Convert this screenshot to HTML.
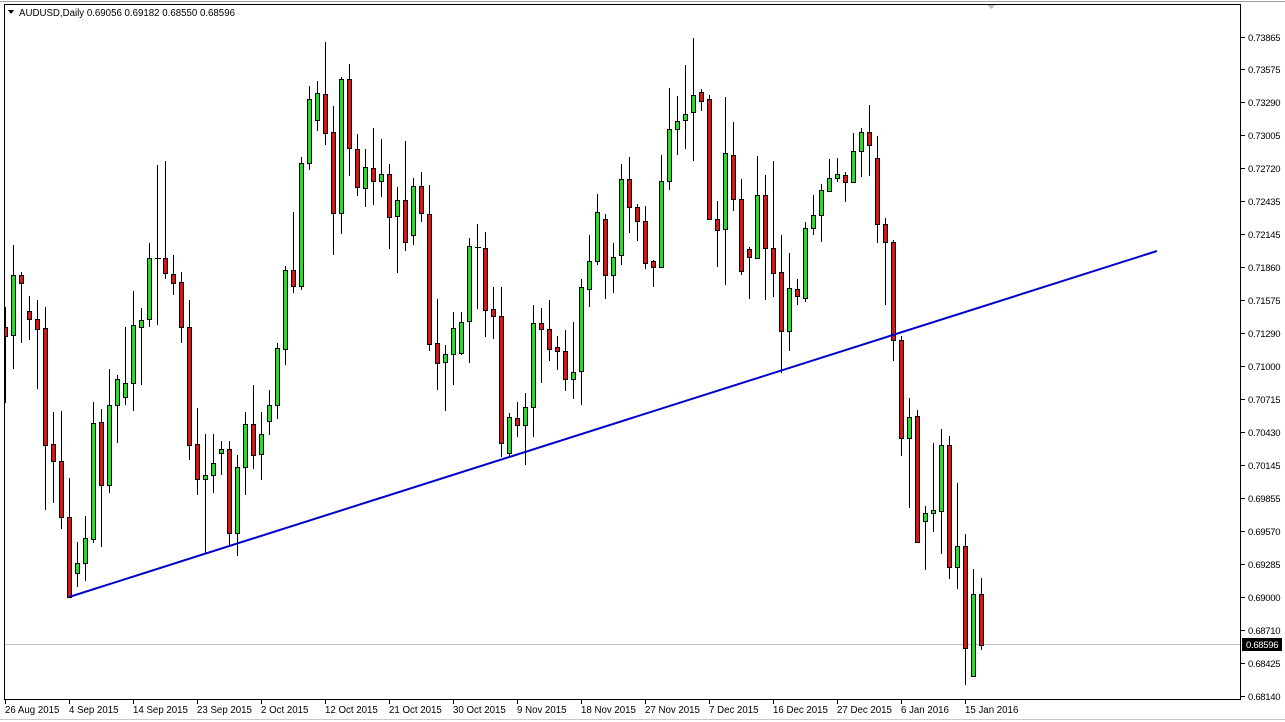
<!DOCTYPE html>
<html><head><meta charset="utf-8"><style>
html,body{margin:0;padding:0;background:#fff;}
svg{display:block;}
text{font-family:"Liberation Sans",sans-serif;font-size:9.7px;fill:#000;}
.ax text{font-size:9.5px;letter-spacing:-0.3px;}
</style></head><body>
<svg width="1285" height="722" viewBox="0 0 1285 722" xmlns="http://www.w3.org/2000/svg" shape-rendering="crispEdges">
<rect width="1285" height="722" fill="#fff"/>
<line x1="0" y1="1.5" x2="1285" y2="1.5" stroke="#a0a0a0"/>
<line x1="0" y1="719.5" x2="1285" y2="719.5" stroke="#c8c8c8"/>
<polygon points="986,4 996,4 991,9" fill="#c0c0c0"/>
<defs><clipPath id="c"><rect x="5" y="5" width="1236" height="695"/></clipPath></defs>
<line x1="4" y1="644.5" x2="1241" y2="644.5" stroke="#c0c0c0"/>
<g clip-path="url(#c)">
<path stroke="#000" stroke-width="1" fill="none" d="M5.5 307V403M13.5 245V369M21.5 272V343M29.5 296V340M37.5 300V389M45.5 307V510M53.5 412V503M61.5 411V529M69.5 478V597M77.5 542V587M85.5 516V581M93.5 402V543M101.5 409V547M109.5 369V493M117.5 375V443M125.5 327V405M133.5 291V411M141.5 308V385M149.5 243V327M157.5 165V325M165.5 161V279M173.5 255V295M181.5 272V343M189.5 300V460M197.5 408V495M205.5 434V553M213.5 434V493M221.5 441V475M229.5 441V547M237.5 455V556M245.5 412V495M253.5 385V469M261.5 412V480M269.5 390V435M277.5 343V419M285.5 266V365M293.5 212V293M301.5 157V290M309.5 86V170M317.5 81V131M325.5 42V145M333.5 106V255M341.5 77V234M349.5 64V176M357.5 134V196M365.5 149V207M373.5 128V205M381.5 139V197M389.5 164V249M397.5 187V273M405.5 141V251M413.5 178V245M421.5 172V222M429.5 185V351M437.5 299V390M445.5 345V411M453.5 312V385M461.5 312V355M469.5 238V363M477.5 224V309M485.5 232V337M493.5 287V339M501.5 287V457M509.5 413V457M517.5 402V437M525.5 393V465M533.5 305V437M541.5 308V383M549.5 300V361M557.5 336V370M565.5 330V391M573.5 322V399M581.5 279V405M589.5 235V307M597.5 194V265M605.5 214V299M613.5 243V293M621.5 164V265M629.5 157V233M637.5 204V241M645.5 206V269M653.5 260V287M661.5 155V267M669.5 88V190M677.5 96V155M685.5 65V149M693.5 38V161M701.5 89V111M709.5 95V219M717.5 201V267M725.5 97V285M733.5 122V211M741.5 179V275M749.5 247V299M757.5 156V259M765.5 175V300M773.5 161V297M781.5 235V373M789.5 253V351M797.5 279V305M805.5 222V302M813.5 195V235M821.5 184V242M829.5 159V192M837.5 158V182M845.5 172V202M853.5 133V182M861.5 128V177M869.5 105V176M877.5 136V243M885.5 218V305M893.5 240V361M901.5 336V456M909.5 398V508M917.5 410V542M925.5 506V570M933.5 443V532M941.5 429V554M949.5 436V579M957.5 483V589M965.5 534V685M973.5 569V677M981.5 578V650M155 258.5H161M475 247.5H481"/>
<g fill="#22e022" stroke="#000" stroke-width="1">
<rect x="11.5" y="275.5" width="4" height="60"/><rect x="75.5" y="563.5" width="4" height="10"/><rect x="83.5" y="538.5" width="4" height="25"/><rect x="91.5" y="423.5" width="4" height="116"/><rect x="107.5" y="405.5" width="4" height="80"/><rect x="115.5" y="379.5" width="4" height="26"/><rect x="123.5" y="383.5" width="4" height="14"/><rect x="131.5" y="325.5" width="4" height="58"/><rect x="139.5" y="320.5" width="4" height="7"/><rect x="147.5" y="258.5" width="4" height="61"/><rect x="203.5" y="475.5" width="4" height="4"/><rect x="211.5" y="463.5" width="4" height="12"/><rect x="219.5" y="449.5" width="4" height="4"/><rect x="235.5" y="467.5" width="4" height="66"/><rect x="243.5" y="424.5" width="4" height="43"/><rect x="259.5" y="434.5" width="4" height="20"/><rect x="267.5" y="405.5" width="4" height="16"/><rect x="275.5" y="348.5" width="4" height="57"/><rect x="283.5" y="270.5" width="4" height="79"/><rect x="299.5" y="163.5" width="4" height="123"/><rect x="307.5" y="99.5" width="4" height="64"/><rect x="315.5" y="93.5" width="4" height="27"/><rect x="339.5" y="79.5" width="4" height="134"/><rect x="363.5" y="167.5" width="4" height="21"/><rect x="379.5" y="174.5" width="4" height="7"/><rect x="395.5" y="200.5" width="4" height="16"/><rect x="411.5" y="186.5" width="4" height="49"/><rect x="443.5" y="354.5" width="4" height="8"/><rect x="451.5" y="328.5" width="4" height="26"/><rect x="459.5" y="322.5" width="4" height="31"/><rect x="467.5" y="246.5" width="4" height="75"/><rect x="507.5" y="417.5" width="4" height="36"/><rect x="523.5" y="407.5" width="4" height="18"/><rect x="531.5" y="323.5" width="4" height="84"/><rect x="571.5" y="372.5" width="4" height="7"/><rect x="579.5" y="287.5" width="4" height="84"/><rect x="587.5" y="261.5" width="4" height="28"/><rect x="595.5" y="212.5" width="4" height="49"/><rect x="611.5" y="257.5" width="4" height="18"/><rect x="619.5" y="179.5" width="4" height="76"/><rect x="659.5" y="181.5" width="4" height="86"/><rect x="667.5" y="129.5" width="4" height="52"/><rect x="675.5" y="121.5" width="4" height="8"/><rect x="683.5" y="114.5" width="4" height="6"/><rect x="691.5" y="95.5" width="4" height="17"/><rect x="723.5" y="153.5" width="4" height="76"/><rect x="755.5" y="195.5" width="4" height="63"/><rect x="787.5" y="288.5" width="4" height="43"/><rect x="803.5" y="228.5" width="4" height="70"/><rect x="811.5" y="215.5" width="4" height="13"/><rect x="819.5" y="190.5" width="4" height="25"/><rect x="827.5" y="178.5" width="4" height="13"/><rect x="835.5" y="174.5" width="4" height="4"/><rect x="851.5" y="151.5" width="4" height="31"/><rect x="859.5" y="132.5" width="4" height="19"/><rect x="907.5" y="417.5" width="4" height="21"/><rect x="923.5" y="513.5" width="4" height="8"/><rect x="931.5" y="510.5" width="4" height="3"/><rect x="939.5" y="445.5" width="4" height="66"/><rect x="955.5" y="546.5" width="4" height="21"/><rect x="971.5" y="594.5" width="4" height="82"/>
</g>
<g fill="#e01414" stroke="#000" stroke-width="1">
<rect x="3.5" y="327.5" width="4" height="9"/><rect x="19.5" y="275.5" width="4" height="8"/><rect x="27.5" y="311.5" width="4" height="8"/><rect x="35.5" y="319.5" width="4" height="10"/><rect x="43.5" y="328.5" width="4" height="117"/><rect x="51.5" y="444.5" width="4" height="17"/><rect x="59.5" y="461.5" width="4" height="56"/><rect x="67.5" y="517.5" width="4" height="80"/><rect x="99.5" y="422.5" width="4" height="63"/><rect x="163.5" y="258.5" width="4" height="15"/><rect x="171.5" y="274.5" width="4" height="9"/><rect x="179.5" y="282.5" width="4" height="45"/><rect x="187.5" y="327.5" width="4" height="118"/><rect x="195.5" y="444.5" width="4" height="35"/><rect x="227.5" y="449.5" width="4" height="84"/><rect x="251.5" y="424.5" width="4" height="31"/><rect x="291.5" y="270.5" width="4" height="16"/><rect x="323.5" y="94.5" width="4" height="39"/><rect x="331.5" y="132.5" width="4" height="81"/><rect x="347.5" y="79.5" width="4" height="69"/><rect x="355.5" y="149.5" width="4" height="38"/><rect x="371.5" y="168.5" width="4" height="13"/><rect x="387.5" y="174.5" width="4" height="43"/><rect x="403.5" y="200.5" width="4" height="42"/><rect x="419.5" y="186.5" width="4" height="27"/><rect x="427.5" y="214.5" width="4" height="130"/><rect x="435.5" y="343.5" width="4" height="20"/><rect x="483.5" y="248.5" width="4" height="62"/><rect x="491.5" y="309.5" width="4" height="7"/><rect x="499.5" y="316.5" width="4" height="127"/><rect x="515.5" y="418.5" width="4" height="7"/><rect x="539.5" y="323.5" width="4" height="6"/><rect x="547.5" y="329.5" width="4" height="20"/><rect x="555.5" y="347.5" width="4" height="4"/><rect x="563.5" y="351.5" width="4" height="28"/><rect x="603.5" y="219.5" width="4" height="56"/><rect x="627.5" y="179.5" width="4" height="28"/><rect x="635.5" y="207.5" width="4" height="14"/><rect x="643.5" y="221.5" width="4" height="42"/><rect x="651.5" y="261.5" width="4" height="6"/><rect x="699.5" y="92.5" width="4" height="9"/><rect x="707.5" y="99.5" width="4" height="120"/><rect x="715.5" y="219.5" width="4" height="11"/><rect x="731.5" y="155.5" width="4" height="44"/><rect x="739.5" y="199.5" width="4" height="72"/><rect x="747.5" y="249.5" width="4" height="8"/><rect x="763.5" y="195.5" width="4" height="53"/><rect x="771.5" y="248.5" width="4" height="25"/><rect x="779.5" y="272.5" width="4" height="59"/><rect x="795.5" y="289.5" width="4" height="7"/><rect x="843.5" y="175.5" width="4" height="7"/><rect x="867.5" y="132.5" width="4" height="13"/><rect x="875.5" y="158.5" width="4" height="66"/><rect x="883.5" y="224.5" width="4" height="18"/><rect x="891.5" y="242.5" width="4" height="98"/><rect x="899.5" y="340.5" width="4" height="98"/><rect x="915.5" y="416.5" width="4" height="126"/><rect x="947.5" y="445.5" width="4" height="122"/><rect x="963.5" y="546.5" width="4" height="102"/><rect x="979.5" y="594.5" width="4" height="51"/>
</g>
<line x1="69" y1="597" x2="1157" y2="251" stroke="#0000cc" stroke-width="2" shape-rendering="auto"/>
</g>
<rect x="4.5" y="4.5" width="1236" height="695" fill="none" stroke="#000"/>
<polygon points="8,10 14,10 11,14" fill="#000"/>
<text x="19" y="16">AUDUSD,Daily  0.69056 0.69182 0.68550 0.68596</text>
<g stroke="#000">
<path d="M1241 37.5h4M1241 69.5h4M1241 102.5h4M1241 135.5h4M1241 168.5h4M1241 201.5h4M1241 234.5h4M1241 267.5h4M1241 300.5h4M1241 333.5h4M1241 366.5h4M1241 399.5h4M1241 432.5h4M1241 465.5h4M1241 498.5h4M1241 531.5h4M1241 564.5h4M1241 597.5h4M1241 630.5h4M1241 663.5h4M1241 696.5h4"/>
<path d="M5.5 700v4M69.5 700v4M133.5 700v4M197.5 700v4M261.5 700v4M325.5 700v4M389.5 700v4M453.5 700v4M517.5 700v4M581.5 700v4M645.5 700v4M709.5 700v4M773.5 700v4M837.5 700v4M901.5 700v4M965.5 700v4"/>
</g>
<g class="ax">
<text x="1248" y="41">0.73865</text><text x="1248" y="73">0.73575</text><text x="1248" y="106">0.73290</text><text x="1248" y="139">0.73005</text><text x="1248" y="172">0.72720</text><text x="1248" y="205">0.72435</text><text x="1248" y="238">0.72145</text><text x="1248" y="271">0.71860</text><text x="1248" y="304">0.71575</text><text x="1248" y="337">0.71290</text><text x="1248" y="370">0.71000</text><text x="1248" y="403">0.70715</text><text x="1248" y="436">0.70430</text><text x="1248" y="469">0.70145</text><text x="1248" y="502">0.69855</text><text x="1248" y="535">0.69570</text><text x="1248" y="568">0.69285</text><text x="1248" y="601">0.69000</text><text x="1248" y="634">0.68710</text><text x="1248" y="667">0.68425</text><text x="1248" y="700">0.68140</text>
<rect x="1242" y="638" width="40" height="13" fill="#000"/>
<text x="1246" y="648" style="fill:#fff">0.68596</text>
</g>
<g>
<text x="5" y="713">26 Aug 2015</text><text x="69" y="713">4 Sep 2015</text><text x="133" y="713">14 Sep 2015</text><text x="197" y="713">23 Sep 2015</text><text x="261" y="713">2 Oct 2015</text><text x="325" y="713">12 Oct 2015</text><text x="389" y="713">21 Oct 2015</text><text x="453" y="713">30 Oct 2015</text><text x="517" y="713">9 Nov 2015</text><text x="581" y="713">18 Nov 2015</text><text x="645" y="713">27 Nov 2015</text><text x="709" y="713">7 Dec 2015</text><text x="773" y="713">16 Dec 2015</text><text x="837" y="713">27 Dec 2015</text><text x="901" y="713">6 Jan 2016</text><text x="965" y="713">15 Jan 2016</text>
</g>
</svg>
</body></html>
